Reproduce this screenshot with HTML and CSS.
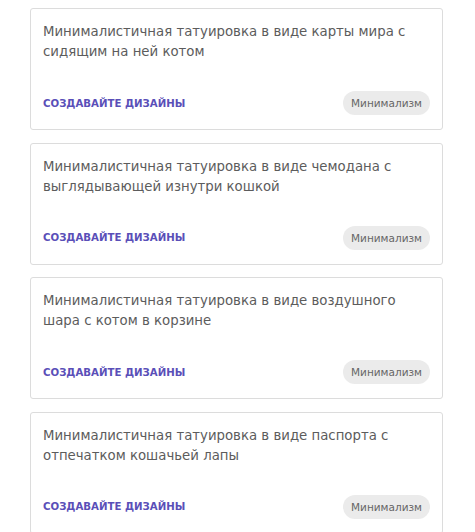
FILE: index.html
```html
<!DOCTYPE html>
<html lang="ru">
<head>
<meta charset="utf-8">
<link rel="stylesheet" href="styles.css">
</head>
<body>
<div class="list">
  <div class="card">
    <p class="title">Минималистичная татуировка в виде карты мира с сидящим на ней котом</p>
    <div class="footer"><a class="cta">СОЗДАВАЙТЕ ДИЗАЙНЫ</a><span class="tag">Минимализм</span></div>
  </div>
  <div class="card">
    <p class="title">Минималистичная татуировка в виде чемодана с выглядывающей изнутри кошкой</p>
    <div class="footer"><a class="cta">СОЗДАВАЙТЕ ДИЗАЙНЫ</a><span class="tag">Минимализм</span></div>
  </div>
  <div class="card">
    <p class="title">Минималистичная татуировка в виде воздушного шара с котом в корзине</p>
    <div class="footer"><a class="cta">СОЗДАВАЙТЕ ДИЗАЙНЫ</a><span class="tag">Минимализм</span></div>
  </div>
  <div class="card">
    <p class="title">Минималистичная татуировка в виде паспорта с отпечатком кошачьей лапы</p>
    <div class="footer"><a class="cta">СОЗДАВАЙТЕ ДИЗАЙНЫ</a><span class="tag">Минимализм</span></div>
  </div>
</div>
</body>
</html>
```

FILE: styles.css
```css
html, body {
  margin: 0;
  padding: 0;
  background: #ffffff;
}
body {
  font-family: "DejaVu Sans", "Noto Sans", sans-serif;
}
.list {
  display: flex;
  flex-direction: column;
  gap: 12.5px;
  padding: 8px 32px 0 30px;
}
.card {
  box-sizing: border-box;
  height: 122px;
  border: 1px solid #dcdcdc;
  border-radius: 3px;
  padding: 13px 12px 14px 12px;
  display: flex;
  flex-direction: column;
  justify-content: space-between;
}
.title {
  margin: 0;
  font-size: 13.3px;
  line-height: 20px;
  color: #5c5c5c;
  padding-right: 20px;
}
.footer {
  display: flex;
  align-items: center;
  justify-content: space-between;
}
.cta {
  font-size: 10.2px;
  font-weight: bold;
  color: #5a4fb8;
}
.tag {
  background: #ebebeb;
  color: #666666;
  font-size: 10.5px;
  height: 24px;
  line-height: 24px;
  padding: 0 8px;
  border-radius: 12px;
}
```
